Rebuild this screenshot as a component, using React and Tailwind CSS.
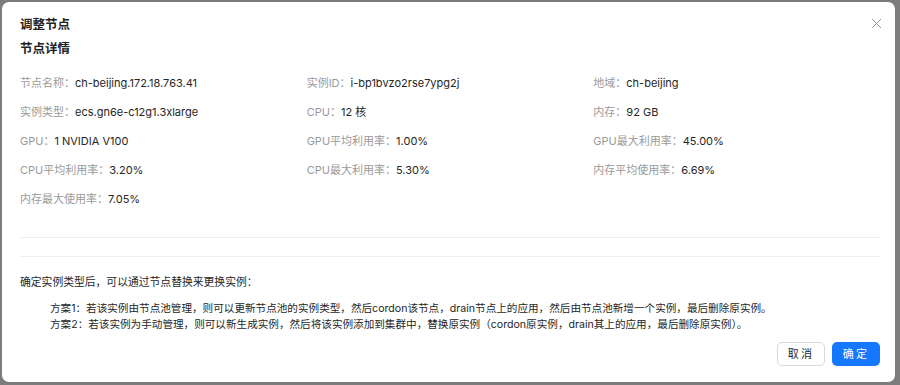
import { X } from "lucide-react";

const DETAILS = [
  ["节点名称", "ch-beijing.172.18.763.41"],
  ["实例ID", "i-bp1bvzo2rse7ypg2j"],
  ["地域", "ch-beijing"],
  ["实例类型", "ecs.gn6e-c12g1.3xlarge"],
  ["CPU", "12 核"],
  ["内存", "92 GB"],
  ["GPU", "1 NVIDIA V100"],
  ["GPU平均利用率", "1.00%"],
  ["GPU最大利用率", "45.00%"],
  ["CPU平均利用率", "3.20%"],
  ["CPU最大利用率", "5.30%"],
  ["内存平均使用率", "6.69%"],
  ["内存最大使用率", "7.05%"]
];

export default function App() {
  return (
    <div
      className="h-[385px] w-[900px] overflow-hidden bg-[#7c7c7c] p-[2px] pr-[5px] pb-[3px]"
      style={{ fontFamily: '"Inter", "Noto Sans CJK SC", sans-serif' }}
    >
      <div className="relative flex h-full w-full flex-col rounded-[7px] bg-white pl-[18px] pr-[15px] pt-[14px]">
        <button className="absolute right-[10px] top-[13px] text-[#8c8c8c]">
          <X size={17} strokeWidth={1.3} />
        </button>

        <h2 className="text-[12.5px] font-semibold leading-[18px] text-[#222]">调整节点</h2>
        <h3 className="mt-[6px] text-[12.5px] font-semibold leading-[18px] text-[#222]">节点详情</h3>

        <div className="mt-[16px] grid grid-cols-3 gap-y-[11px] text-[11px] leading-[18px]">
          {DETAILS.map(([label, value]) => (
            <div key={label} className="flex">
              <span className="text-[#9a9a9a]">{label}：</span>
              <span className="text-[#262626]">{value}</span>
            </div>
          ))}
        </div>

        <div className="mt-[29px] border-t border-[#f0f0f0]" />
        <div className="mt-[18px] border-t border-[#f0f0f0]" />

        <p className="mt-[17px] text-[10.8px] leading-[18px] text-[#262626]">
          确定实例类型后，可以通过节点替换来更换实例：
        </p>
        <div className="mt-[9px] pl-[30px] text-[10.6px] leading-[16px] text-[#262626]">
          <p>方案1：若该实例由节点池管理，则可以更新节点池的实例类型，然后cordon该节点，drain节点上的应用，然后由节点池新增一个实例，最后删除原实例。</p>
          <p>方案2：若该实例为手动管理，则可以新生成实例，然后将该实例添加到集群中，替换原实例（cordon原实例，drain其上的应用，最后删除原实例）。</p>
        </div>

        <div className="mt-[9px] flex justify-end gap-[7px]">
          <button className="h-[24px] w-[48px] rounded-[5px] border border-[#d9d9d9] bg-white text-[11px] tracking-[0.2em] text-[#262626]">
            取消
          </button>
          <button className="h-[24px] w-[48px] rounded-[5px] bg-[#1677ff] text-[11px] tracking-[0.2em] text-white">
            确定
          </button>
        </div>
      </div>
    </div>
  );
}
